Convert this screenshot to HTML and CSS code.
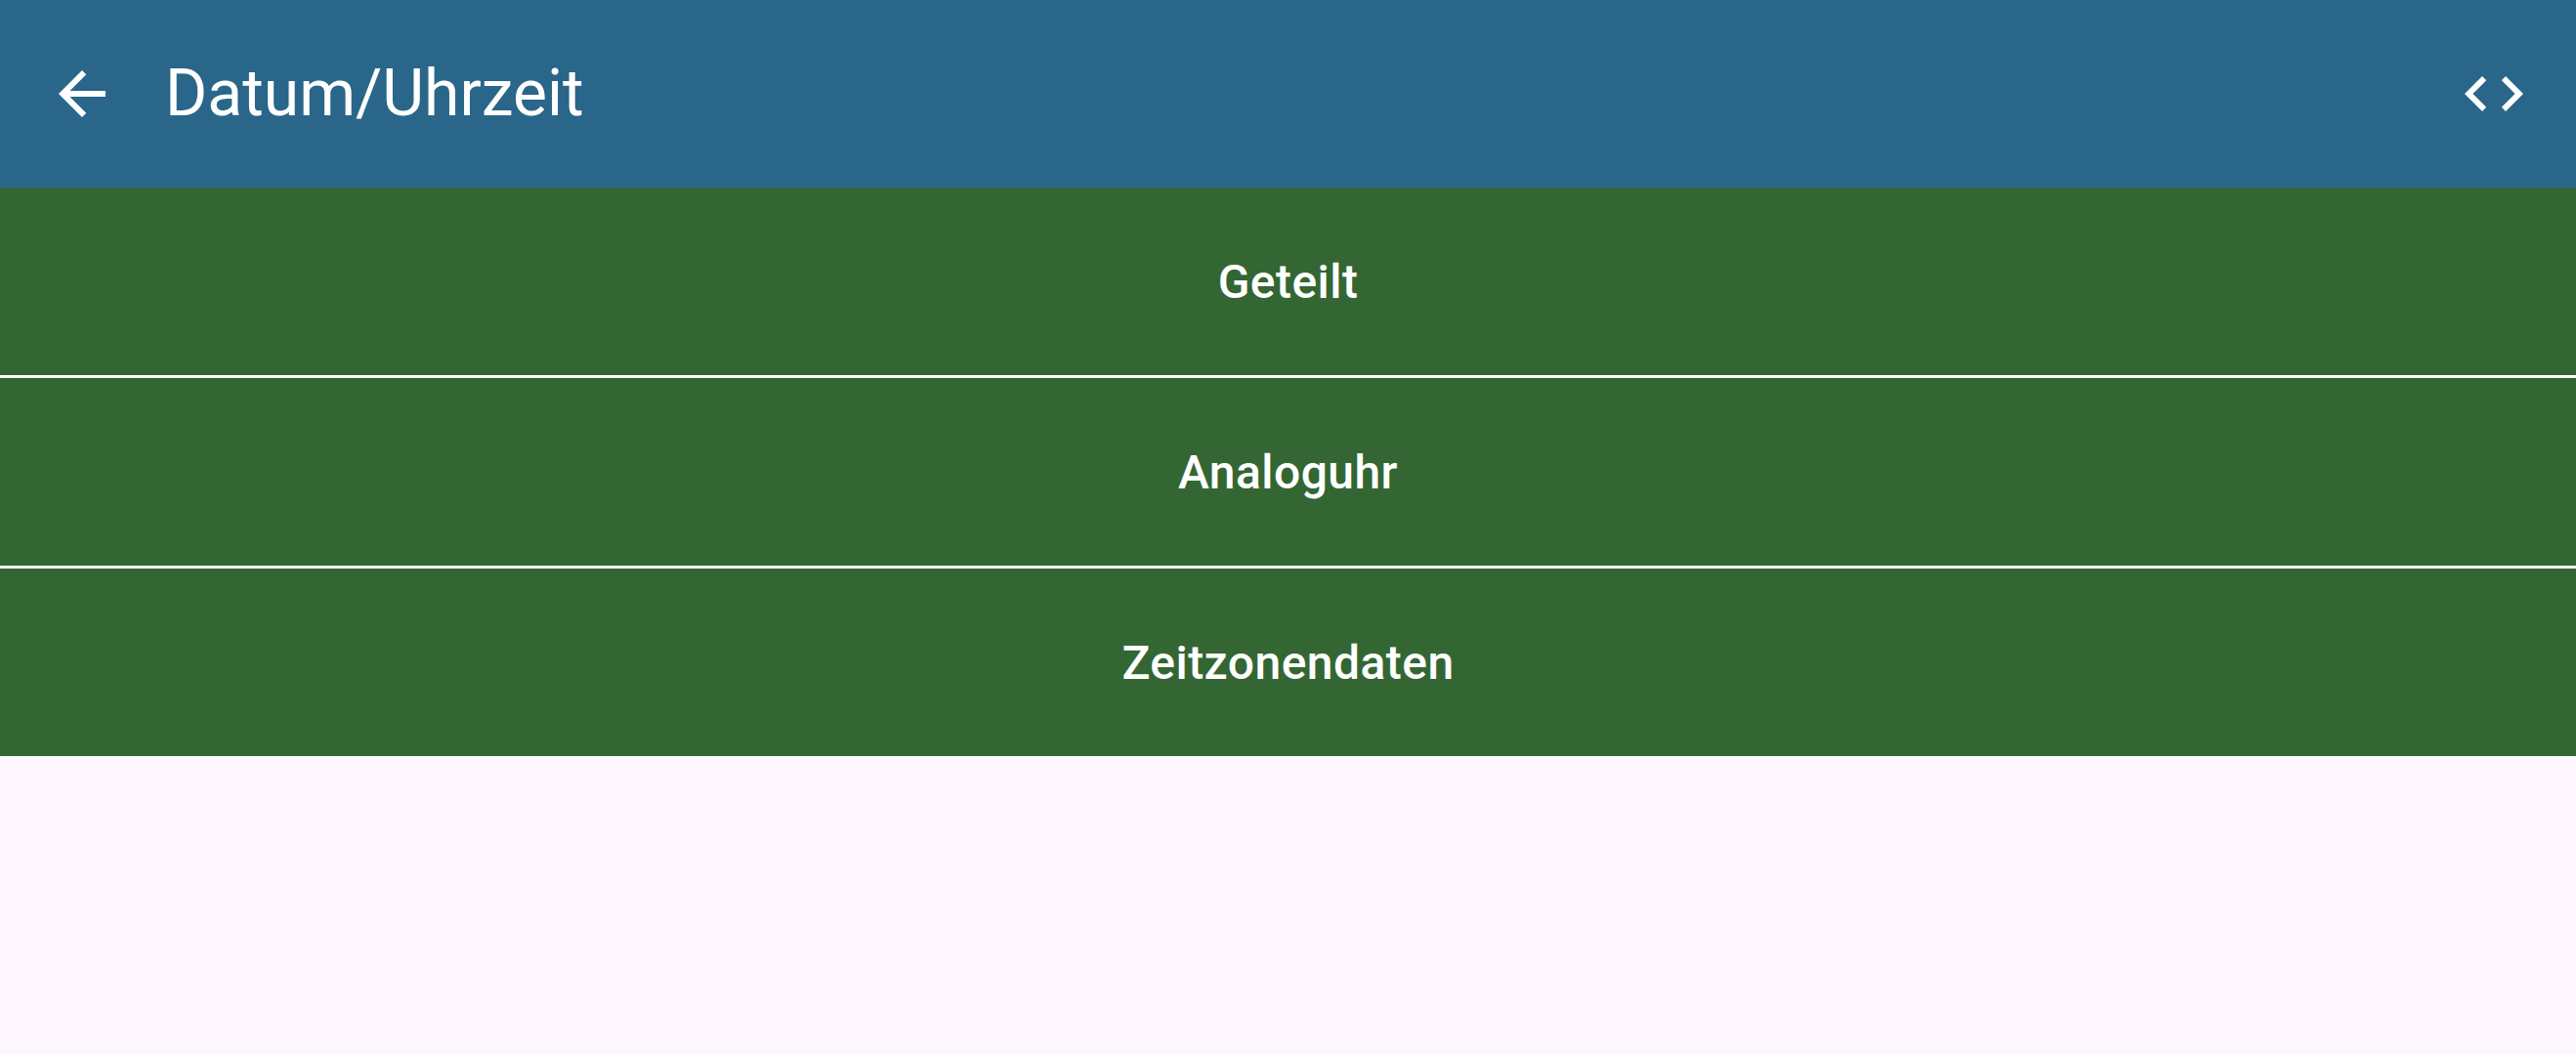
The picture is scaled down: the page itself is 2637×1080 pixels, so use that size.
FILE: index.html
```html
<!DOCTYPE html>
<html lang="de">
<head>
<meta charset="utf-8">
<title>Datum/Uhrzeit</title>
<link rel="stylesheet" href="styles.css">
</head>
<body>
<header class="topbar">
  <button class="icon-btn back" aria-label="Zurück">
    <svg viewBox="0 0 24 24" width="72" height="72"><path fill="#fff" d="M20 11H7.83l5.59-5.59L12 4l-8 8 8 8 1.41-1.41L7.83 13H20v-2z"/></svg>
  </button>
  <h1 class="title">Datum/Uhrzeit</h1>
  <button class="icon-btn code" aria-label="Code">
    <svg viewBox="0 0 24 24" width="72" height="72"><path fill="#fff" d="M9.4 16.6L4.8 12l4.6-4.6L8 6l-6 6 6 6 1.4-1.4zm5.2 0l4.6-4.6-4.6-4.6L16 6l6 6-6 6-1.4-1.4z"/></svg>
  </button>
</header>
<main class="list">
  <button class="item">Geteilt</button>
  <div class="divider"></div>
  <button class="item">Analoguhr</button>
  <div class="divider"></div>
  <button class="item">Zeitzonendaten</button>
</main>
</body>
</html>
```
FILE: styles.css
```css
html, body {
  margin: 0;
  padding: 0;
  background: #fef7ff;
  font-family: Roboto, "Noto Sans", sans-serif;
}
.topbar {
  height: 192px;
  background: #296689;
  display: flex;
  align-items: center;
  padding: 0 48px;
  box-sizing: border-box;
}
.icon-btn {
  width: 72px;
  height: 72px;
  padding: 0;
  border: 0;
  background: transparent;
  display: flex;
  align-items: center;
  justify-content: center;
}
.icon-btn svg { display: block; }
.title {
  flex: 1;
  margin: 0 0 0 49px;
  color: #fff;
  font-size: 66px;
  font-weight: 400;
  line-height: 1;
}
.list {
  display: flex;
  flex-direction: column;
}
.item {
  height: 192px;
  border: 0;
  margin: 0;
  background: #336633;
  color: #fff;
  font-family: Roboto, "Noto Sans", sans-serif;
  font-size: 48px;
  font-weight: 500;
  letter-spacing: 0.45px;
  text-align: center;
}
.divider {
  height: 3px;
  background: #fff;
}
```
